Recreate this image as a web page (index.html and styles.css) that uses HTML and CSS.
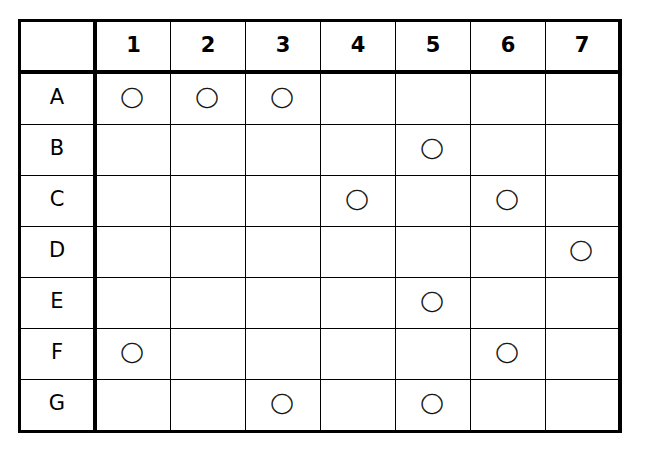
FILE: index.html
```html
<!DOCTYPE html>
<html lang="ja">
<head>
<meta charset="utf-8">
<title>表</title>
<link rel="stylesheet" href="styles.css">
</head>
<body>
<div class="grid">
  <div class="c h rh"></div>
  <div class="c h">1</div><div class="c h">2</div><div class="c h">3</div><div class="c h">4</div><div class="c h">5</div><div class="c h">6</div><div class="c h last-col">7</div>

  <div class="c rh">A</div>
  <div class="c"><span class="o">○</span></div><div class="c"><span class="o">○</span></div><div class="c"><span class="o">○</span></div><div class="c"></div><div class="c"></div><div class="c"></div><div class="c last-col"></div>

  <div class="c rh">B</div>
  <div class="c"></div><div class="c"></div><div class="c"></div><div class="c"></div><div class="c"><span class="o">○</span></div><div class="c"></div><div class="c last-col"></div>

  <div class="c rh">C</div>
  <div class="c"></div><div class="c"></div><div class="c"></div><div class="c"><span class="o">○</span></div><div class="c"></div><div class="c"><span class="o">○</span></div><div class="c last-col"></div>

  <div class="c rh">D</div>
  <div class="c"></div><div class="c"></div><div class="c"></div><div class="c"></div><div class="c"></div><div class="c"></div><div class="c last-col"><span class="o">○</span></div>

  <div class="c rh">E</div>
  <div class="c"></div><div class="c"></div><div class="c"></div><div class="c"></div><div class="c"><span class="o">○</span></div><div class="c"></div><div class="c last-col"></div>

  <div class="c rh">F</div>
  <div class="c"><span class="o">○</span></div><div class="c"></div><div class="c"></div><div class="c"></div><div class="c"></div><div class="c"><span class="o">○</span></div><div class="c last-col"></div>

  <div class="c rh last-row">G</div>
  <div class="c last-row"></div><div class="c last-row"></div><div class="c last-row"><span class="o">○</span></div><div class="c last-row"></div><div class="c last-row"><span class="o">○</span></div><div class="c last-row"></div><div class="c last-row last-col"></div>
</div>
</body>
</html>
```
FILE: styles.css
```css
html, body {
  margin: 0;
  padding: 0;
  background: #fff;
}
body {
  padding: 19px 0 0 18px;
  font-family: "DejaVu Sans", Verdana, sans-serif;
  color: #000;
}
.grid {
  display: inline-grid;
  grid-template-columns: 76px 74px repeat(5, 75px) 72px;
  grid-template-rows: 52px repeat(6, 51px) 50px;
  border-style: solid;
  border-color: #000;
  border-width: 3px 4px 3px 3px;
}
.c {
  box-sizing: border-box;
  border-right: 1px solid #000;
  border-bottom: 1px solid #000;
  display: flex;
  align-items: center;
  justify-content: center;
  font-size: 21px;
  line-height: 1;
  padding-bottom: 3px;
}
.h {
  border-bottom-width: 4px;
  font-weight: bold;
  padding-bottom: 2px;
}
.rh {
  border-right-width: 4px;
}
.last-col {
  border-right: none;
}
.last-row {
  border-bottom: none;
}
.o {
  font-family: "Noto Sans CJK JP", sans-serif;
  font-size: 22px;
  line-height: 1;
  display: inline-block;
  margin-right: 2px;
  transform: translateY(-2px) scaleX(1.05);
  -webkit-text-stroke: 0.4px #000;
}
```
